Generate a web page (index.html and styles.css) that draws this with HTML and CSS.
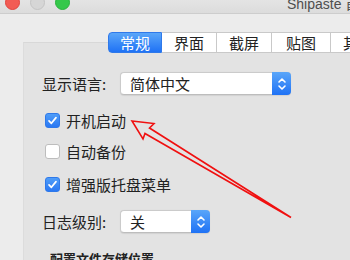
FILE: index.html
```html
<!DOCTYPE html>
<html>
<head>
<meta charset="utf-8">
<link rel="stylesheet" href="styles.css">
</head>
<body>
<div class="window">
  <div class="titlebar">
    <span class="light red"></span>
    <span class="light gray"></span>
    <span class="light green"></span>
    <span class="title">Shipaste 首选项</span>
  </div>
  <div class="body">
    <div class="tabs">
      <div class="tab active">常规</div>
      <div class="tab">界面</div>
      <div class="tab">截屏</div>
      <div class="tab">贴图</div>
      <div class="tab">其他</div>
    </div>
    <div class="pane">
      <div class="row select-row">
        <span class="label">显示语言:</span>
        <div class="select wide"><span class="value">简体中文</span><span class="stepper"><svg width="10" height="14" viewBox="0 0 10 14"><path d="M2 5 L5 2 L8 5 M2 9 L5 12 L8 9" fill="none" stroke="#fff" stroke-width="1.6" stroke-linecap="round" stroke-linejoin="round"/></svg></span></div>
      </div>
      <div class="row check-row first">
        <span class="box checked"><svg width="11" height="11" viewBox="0 0 11 11"><path d="M2 5.8 L4.4 8.3 L9 2.6" fill="none" stroke="#fff" stroke-width="1.7" stroke-linecap="round" stroke-linejoin="round"/></svg></span>
        <span class="text">开机启动</span>
      </div>
      <div class="row check-row">
        <span class="box"></span>
        <span class="text">自动备份</span>
      </div>
      <div class="row check-row">
        <span class="box checked"><svg width="11" height="11" viewBox="0 0 11 11"><path d="M2 5.8 L4.4 8.3 L9 2.6" fill="none" stroke="#fff" stroke-width="1.7" stroke-linecap="round" stroke-linejoin="round"/></svg></span>
        <span class="text">增强版托盘菜单</span>
      </div>
      <div class="row select-row log">
        <span class="label">日志级别:</span>
        <div class="select narrow"><span class="value">关</span><span class="stepper"><svg width="10" height="14" viewBox="0 0 10 14"><path d="M2 5 L5 2 L8 5 M2 9 L5 12 L8 9" fill="none" stroke="#fff" stroke-width="1.6" stroke-linecap="round" stroke-linejoin="round"/></svg></span></div>
      </div>
      <div class="section">配置文件存储位置</div>
    </div>
  </div>
  <svg class="arrow" width="350" height="260" viewBox="0 0 350 260">
    <polygon points="132,121 154,123.5 149.5,128 291,217.5 145,133.5 143,139" fill="none" stroke="#f01010" stroke-width="1.6" stroke-linejoin="miter"/>
  </svg>
</div>
</body>
</html>
```
FILE: styles.css
```css
html, body {
  margin: 0;
  padding: 0;
}
body {
  width: 350px;
  height: 260px;
  overflow: hidden;
  background: #ececec;
  font-family: "Noto Sans CJK SC", "Noto Sans", sans-serif;
  color: #222;
}
.window {
  position: relative;
  width: 350px;
  height: 260px;
  overflow: hidden;
}
.titlebar {
  height: 13px;
  display: flex;
  align-items: flex-start;
  background: linear-gradient(#e4e4e4, #dcdcdc);
  border-bottom: 1px solid #cdcdcd;
  padding-left: 5px;
  overflow: hidden;
}
.light {
  width: 13px;
  height: 13px;
  border-radius: 50%;
  margin-top: -5px;
  margin-right: 10px;
  flex: none;
}
.light.red { background: #f25c54; border: 0.5px solid #e0443e; }
.light.gray { background: #d6d6d6; border: 0.5px solid #c4c4c4; }
.light.green { background: #35c84a; border: 0.5px solid #29b23c; }
.title {
  margin-left: 207px;
  margin-top: -4px;
  font-family: "Liberation Sans", "Noto Sans CJK SC", sans-serif;
  font-size: 14px;
  color: #4e4e4e;
  white-space: nowrap;
  line-height: 16px;
}
.body {
  padding-left: 23px;
  padding-top: 18px;
}
.tabs {
  display: flex;
  margin-left: 85px;
  margin-bottom: -11px;
  position: relative;
  z-index: 1;
  height: 21px;
}
.tab {
  width: 55px;
  height: 21px;
  box-sizing: border-box;
  background: #fff;
  border: 1px solid #c9c9c9;
  border-left: none;
  font-size: 15px;
  line-height: 19px;
  text-align: center;
  color: #222;
  flex: none;
}
.tab:nth-child(4) { width: 59px; }
.tab.active {
  width: 54px;
  background: linear-gradient(#5aa6f9, #1f72f5);
  border: 1px solid #2f79ea;
  border-radius: 4px 0 0 4px;
  color: #fff;
}
.pane {
  background: #e3e3e3;
  border-top: 1px solid #d8d8d8;
  border-left: 1px solid #dcdcdc;
  height: 230px;
  padding-top: 29px;
  padding-left: 18px;
}
.row {
  display: flex;
  align-items: center;
}
.select-row {
  height: 23px;
}
.label {
  font-size: 15px;
  width: 78px;
  flex: none;
  line-height: 23px;
}
.select {
  height: 23px;
  box-sizing: border-box;
  background: #fff;
  border: 1px solid #cbcbcb;
  border-bottom-color: #bdbdbd;
  border-radius: 4px;
  display: flex;
  align-items: stretch;
  box-shadow: 0 0.5px 1px rgba(0,0,0,0.08);
}
.select.wide { width: 171px; }
.select.narrow { width: 90px; }
.value {
  flex: 1;
  font-size: 15px;
  line-height: 21px;
  padding-left: 9px;
}
.stepper {
  width: 19px;
  margin: -1px -1px -1px 0;
  background: linear-gradient(#5aa6f9, #1f72f5);
  border-radius: 0 4px 4px 0;
  display: flex;
  align-items: center;
  justify-content: center;
}
.check-row {
  height: 15px;
  margin-top: 18px;
  padding-left: 3px;
}
.check-row.first { margin-top: 18px; }
.check-row + .check-row { margin-top: 16px; }
.check-row + .check-row + .check-row { margin-top: 18px; }
.box {
  width: 15px;
  height: 15px;
  box-sizing: border-box;
  border-radius: 3px;
  background: #fff;
  border: 1px solid #bdbdbd;
  display: flex;
  align-items: center;
  justify-content: center;
  flex: none;
}
.box.checked {
  background: linear-gradient(#4f9df8, #2a78f3);
  border-color: #2f79ea;
}
.text {
  font-size: 15px;
  margin-left: 6px;
  line-height: 15px;
}
.log {
  margin-top: 18px;
}
.section {
  margin-top: 18px;
  padding-left: 8px;
  font-size: 13px;
  font-weight: 700;
  color: #222;
  line-height: 16px;
}
.arrow {
  position: absolute;
  left: 0;
  top: 0;
  pointer-events: none;
}
```
